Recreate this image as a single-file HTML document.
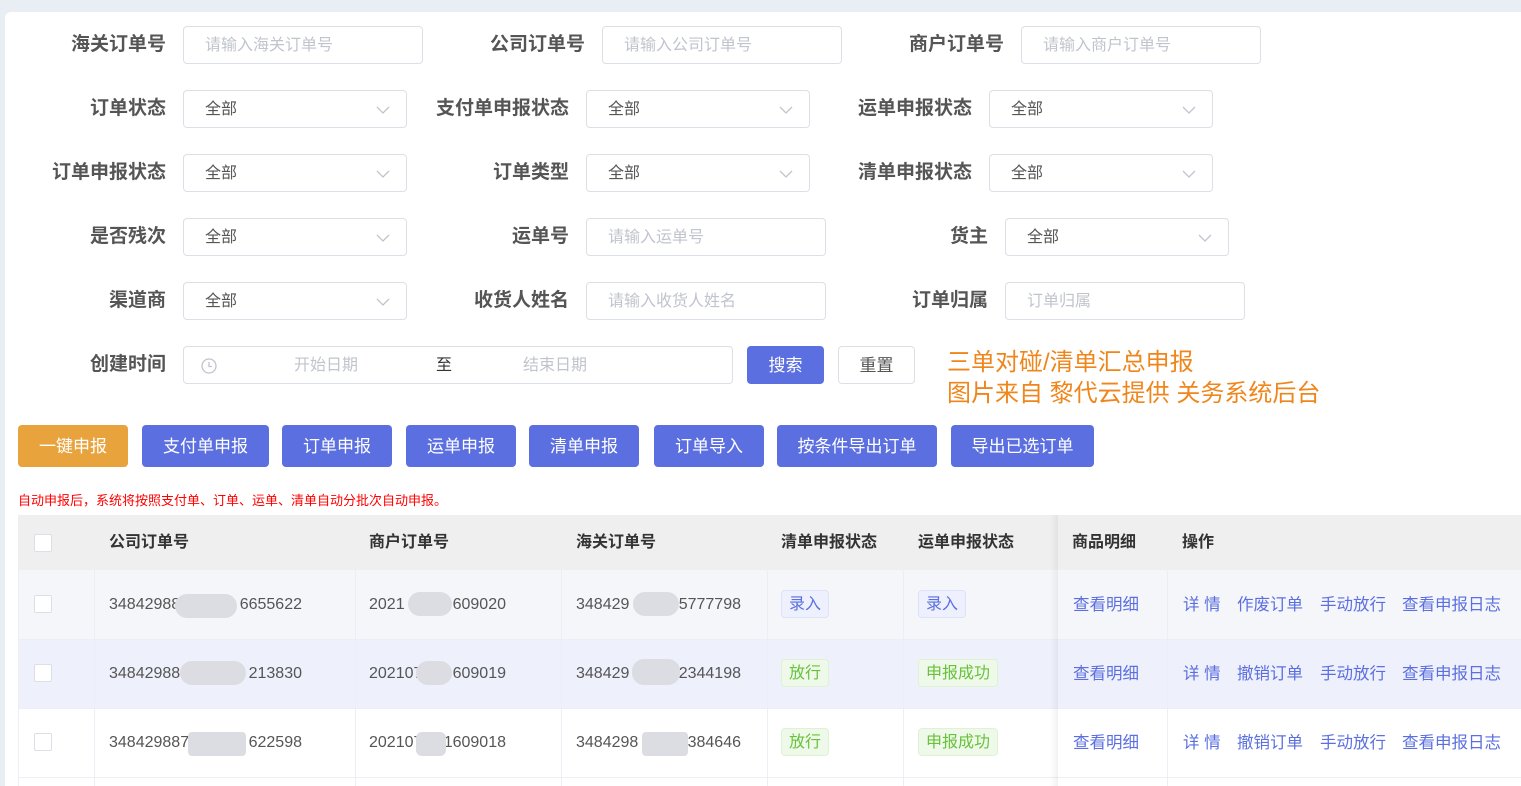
<!DOCTYPE html>
<html><head><meta charset="utf-8">
<style>
*{box-sizing:border-box;margin:0;padding:0}
html,body{width:1521px;height:786px;overflow:hidden}
body{background:#e9edf4;font-family:"Liberation Sans","Noto Sans CJK SC",sans-serif;position:relative}
.card{position:absolute;left:5px;top:12px;width:1516px;height:774px;background:#fff;border-radius:6px 0 0 0}
.a{position:absolute}
.lbl{position:absolute;font-size:19px;font-weight:bold;color:#555;text-align:right;width:160px;line-height:38px}
.in{position:absolute;height:38px;border:1px solid #dcdfe6;border-radius:4px;font-size:16px;line-height:38px;padding-left:21px;color:#c0c4cc;background:#fff}
.sel{color:#555}
.sel svg{position:absolute;right:16px;top:15px}
.btn{position:absolute;top:425px;height:42px;border-radius:4px;background:#5b6fe0;color:#fff;font-size:17px;line-height:44px;text-align:center}
.th{position:absolute;top:515px;height:55px;line-height:55px;font-size:16px;font-weight:bold;color:#333}
.cell{position:absolute;font-size:16px;line-height:20px;color:#555;white-space:nowrap}
.cb{position:absolute;left:34px;width:18px;height:18px;border:1px solid #dcdfe6;border-radius:2px;background:#fff}
.blur{position:absolute;height:24px;background:#dcdde2;border-radius:12px}
.tag{position:absolute;height:28px;line-height:28px;border-radius:4px;font-size:16px;padding:0 7px}
.tb{background:#eef0fd;border:1px solid #dde1fa;color:#5b6fe0}
.tg{background:#eff9ea;border:1px solid #dff2d5;color:#67c23a}
.lk{position:absolute;font-size:16.5px;line-height:20px;color:#5b6fe0;white-space:nowrap}
.vl{position:absolute;top:570px;height:216px;width:1px;background:#ebeef5}
</style></head><body>
<div class="card"></div>

<div class="lbl" style="left:6px;top:26px">海关订单号</div>
<div class="in" style="left:183px;top:26px;width:240px">请输入海关订单号</div>
<div class="lbl" style="left:425px;top:26px">公司订单号</div>
<div class="in" style="left:602px;top:26px;width:240px">请输入公司订单号</div>
<div class="lbl" style="left:844px;top:26px">商户订单号</div>
<div class="in" style="left:1021px;top:26px;width:240px">请输入商户订单号</div>

<div class="lbl" style="left:6px;top:90px">订单状态</div>
<div class="in sel" style="left:183px;top:90px;width:224px">全部<svg width="14" height="9"><path d="M1 1L7 7L13 1" fill="none" stroke="#c0c4cc" stroke-width="1.3"/></svg></div>
<div class="lbl" style="left:409px;top:90px">支付单申报状态</div>
<div class="in sel" style="left:586px;top:90px;width:224px">全部<svg width="14" height="9"><path d="M1 1L7 7L13 1" fill="none" stroke="#c0c4cc" stroke-width="1.3"/></svg></div>
<div class="lbl" style="left:812px;top:90px">运单申报状态</div>
<div class="in sel" style="left:989px;top:90px;width:224px">全部<svg width="14" height="9"><path d="M1 1L7 7L13 1" fill="none" stroke="#c0c4cc" stroke-width="1.3"/></svg></div>

<div class="lbl" style="left:6px;top:154px">订单申报状态</div>
<div class="in sel" style="left:183px;top:154px;width:224px">全部<svg width="14" height="9"><path d="M1 1L7 7L13 1" fill="none" stroke="#c0c4cc" stroke-width="1.3"/></svg></div>
<div class="lbl" style="left:409px;top:154px">订单类型</div>
<div class="in sel" style="left:586px;top:154px;width:224px">全部<svg width="14" height="9"><path d="M1 1L7 7L13 1" fill="none" stroke="#c0c4cc" stroke-width="1.3"/></svg></div>
<div class="lbl" style="left:812px;top:154px">清单申报状态</div>
<div class="in sel" style="left:989px;top:154px;width:224px">全部<svg width="14" height="9"><path d="M1 1L7 7L13 1" fill="none" stroke="#c0c4cc" stroke-width="1.3"/></svg></div>

<div class="lbl" style="left:6px;top:218px">是否残次</div>
<div class="in sel" style="left:183px;top:218px;width:224px">全部<svg width="14" height="9"><path d="M1 1L7 7L13 1" fill="none" stroke="#c0c4cc" stroke-width="1.3"/></svg></div>
<div class="lbl" style="left:409px;top:218px">运单号</div>
<div class="in" style="left:586px;top:218px;width:240px">请输入运单号</div>
<div class="lbl" style="left:828px;top:218px">货主</div>
<div class="in sel" style="left:1005px;top:218px;width:224px">全部<svg width="14" height="9"><path d="M1 1L7 7L13 1" fill="none" stroke="#c0c4cc" stroke-width="1.3"/></svg></div>

<div class="lbl" style="left:6px;top:282px">渠道商</div>
<div class="in sel" style="left:183px;top:282px;width:224px">全部<svg width="14" height="9"><path d="M1 1L7 7L13 1" fill="none" stroke="#c0c4cc" stroke-width="1.3"/></svg></div>
<div class="lbl" style="left:409px;top:282px">收货人姓名</div>
<div class="in" style="left:586px;top:282px;width:240px">请输入收货人姓名</div>
<div class="lbl" style="left:828px;top:282px">订单归属</div>
<div class="in" style="left:1005px;top:282px;width:240px">订单归属</div>

<div class="lbl" style="left:6px;top:346px">创建时间</div>
<div class="in" style="left:183px;top:346px;width:550px;padding:0">
 <svg class="a" style="left:17px;top:11px" width="16" height="16"><circle cx="8" cy="8" r="7" fill="none" stroke="#c0c4cc" stroke-width="1.3"/><path d="M8 4V8.5H11" fill="none" stroke="#c0c4cc" stroke-width="1.3"/></svg>
 <span class="a" style="left:110px">开始日期</span>
 <span class="a" style="left:252px;color:#333">至</span>
 <span class="a" style="left:339px">结束日期</span>
</div>
<div class="a" style="left:747px;top:346px;width:77px;height:38px;background:#5b6fe0;border-radius:4px;color:#fff;font-size:17px;line-height:40px;text-align:center">搜索</div>
<div class="a" style="left:838px;top:346px;width:77px;height:38px;border:1px solid #dcdfe6;border-radius:4px;color:#555;font-size:17px;line-height:38px;text-align:center">重置</div>
<div class="a" style="left:947px;top:347px;font-size:24px;line-height:31px;color:#ef861c">三单对碰/清单汇总申报<br>图片来自 黎代云提供 关务系统后台</div>

<div class="btn" style="left:18px;width:110px;background:#e8a33c">一键申报</div>
<div class="btn" style="left:142px;width:127px">支付单申报</div>
<div class="btn" style="left:282px;width:110px">订单申报</div>
<div class="btn" style="left:406px;width:110px">运单申报</div>
<div class="btn" style="left:529px;width:110px">清单申报</div>
<div class="btn" style="left:654px;width:110px">订单导入</div>
<div class="btn" style="left:777px;width:160px">按条件导出订单</div>
<div class="btn" style="left:951px;width:143px">导出已选订单</div>

<div class="a" style="left:18px;top:492px;font-size:13px;line-height:18px;color:#f00">自动申报后，系统将按照支付单、订单、运单、清单自动分批次自动申报。</div>

<div class="a" style="left:18px;top:515px;width:1px;height:271px;background:#ebeef5"></div>
<div class="a" style="left:19px;top:515px;width:1502px;height:55px;background:#efefef"></div>
<div class="a" style="left:19px;top:570px;width:1502px;height:69px;background:#f5f6fa"></div>
<div class="a" style="left:19px;top:639px;width:1502px;height:69px;background:#eef0fb"></div>
<div class="a" style="left:19px;top:639px;width:1502px;height:1px;background:#ebeef5"></div>
<div class="a" style="left:19px;top:708px;width:1502px;height:1px;background:#ebeef5"></div>
<div class="a" style="left:19px;top:777px;width:1502px;height:1px;background:#ebeef5"></div>
<div class="vl" style="left:94px"></div><div class="vl" style="left:355px"></div><div class="vl" style="left:561px"></div><div class="vl" style="left:767px"></div><div class="vl" style="left:903px"></div><div class="vl" style="left:1167px"></div>
<div class="a" style="left:1050px;top:515px;width:8px;height:271px;background:linear-gradient(to right,rgba(0,0,0,0),rgba(0,0,0,0.05))"></div>

<div class="cb" style="top:534px"></div>
<div class="th" style="left:109px">公司订单号</div>
<div class="th" style="left:369px">商户订单号</div>
<div class="th" style="left:576px">海关订单号</div>
<div class="th" style="left:781px">清单申报状态</div>
<div class="th" style="left:918px">运单申报状态</div>
<div class="th" style="left:1072px">商品明细</div>
<div class="th" style="left:1182px">操作</div>

<div class="cb" style="top:595px"></div>
<div class="cell" style="left:109px;top:595px">34842988</div><div class="cell" style="right:1219px;top:595px">6655622</div>
<div class="blur" style="left:175px;top:594px;width:62px"></div>
<div class="cell" style="left:369px;top:595px">2021</div><div class="cell" style="right:1015px;top:595px">609020</div>
<div class="blur" style="left:408px;top:592px;width:44px"></div>
<div class="cell" style="left:576px;top:595px">348429</div><div class="cell" style="right:780px;top:595px">5777798</div>
<div class="blur" style="left:633px;top:592px;width:46px"></div>
<div class="tag tb" style="left:781px;top:590px">录入</div>
<div class="tag tb" style="left:918px;top:590px">录入</div>
<div class="lk" style="left:1073px;top:595px">查看明细</div>
<div class="lk" style="left:1183px;top:595px">详 情</div><div class="lk" style="left:1237px;top:595px">作废订单</div><div class="lk" style="left:1320px;top:595px">手动放行</div><div class="lk" style="left:1402px;top:595px">查看申报日志</div>

<div class="cb" style="top:664px"></div>
<div class="cell" style="left:109px;top:664px">34842988</div><div class="cell" style="right:1219px;top:664px">213830</div>
<div class="blur" style="left:180px;top:661px;width:66px"></div>
<div class="cell" style="left:369px;top:664px">202107</div><div class="cell" style="right:1015px;top:664px">609019</div>
<div class="blur" style="left:416px;top:661px;width:36px"></div>
<div class="cell" style="left:576px;top:664px">348429</div><div class="cell" style="right:780px;top:664px">2344198</div>
<div class="blur" style="left:632px;top:659px;width:48px;height:26px"></div>
<div class="tag tg" style="left:781px;top:659px">放行</div>
<div class="tag tg" style="left:918px;top:659px">申报成功</div>
<div class="lk" style="left:1073px;top:664px">查看明细</div>
<div class="lk" style="left:1183px;top:664px">详 情</div><div class="lk" style="left:1237px;top:664px">撤销订单</div><div class="lk" style="left:1320px;top:664px">手动放行</div><div class="lk" style="left:1402px;top:664px">查看申报日志</div>

<div class="cb" style="top:733px"></div>
<div class="cell" style="left:109px;top:733px">348429887</div><div class="cell" style="right:1219px;top:733px">622598</div>
<div class="blur" style="left:188px;top:732px;width:58px;border-radius:4px"></div>
<div class="cell" style="left:369px;top:733px">202107</div><div class="cell" style="right:1015px;top:733px">1609018</div>
<div class="blur" style="left:416px;top:732px;width:30px;border-radius:6px"></div>
<div class="cell" style="left:576px;top:733px">3484298</div><div class="cell" style="right:780px;top:733px">384646</div>
<div class="blur" style="left:642px;top:732px;width:46px;border-radius:4px"></div>
<div class="tag tg" style="left:781px;top:728px">放行</div>
<div class="tag tg" style="left:918px;top:728px">申报成功</div>
<div class="lk" style="left:1073px;top:733px">查看明细</div>
<div class="lk" style="left:1183px;top:733px">详 情</div><div class="lk" style="left:1237px;top:733px">撤销订单</div><div class="lk" style="left:1320px;top:733px">手动放行</div><div class="lk" style="left:1402px;top:733px">查看申报日志</div>
</body></html>
